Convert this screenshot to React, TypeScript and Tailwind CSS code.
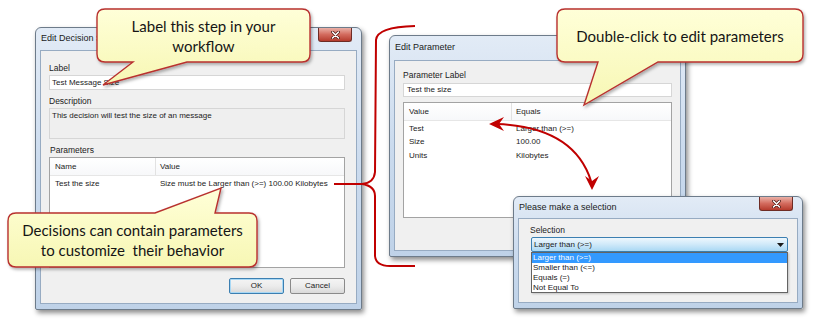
import type { ReactNode } from "react";

const sys = "font-['Liberation_Sans',Arial,sans-serif]";

const CloseBtn = () => (
  <div className="absolute top-0 right-[5px] w-[34px] h-[14px] rounded-b-[3px] border border-t-0 border-[#6e2c25] bg-gradient-to-b from-[#e9b0a7] via-[#d36b5e] to-[#b53b2d] flex items-center justify-center">
    <svg width="9" height="8" viewBox="0 0 9 8">
      <path d="M1.5 1 L7.5 7 M7.5 1 L1.5 7" stroke="#4a1510" strokeWidth="3" strokeLinecap="round" />
      <path d="M1.5 1 L7.5 7 M7.5 1 L1.5 7" stroke="#ffffff" strokeWidth="1.6" strokeLinecap="round" />
    </svg>
  </div>
);

type WinProps = {
  className: string;
  title: string;
  titleH: string;
  children: ReactNode;
};

const Win = ({ className, title, titleH, children }: WinProps) => (
  <div
    className={`absolute flex flex-col border border-[#6d7b8a] rounded-t-[6px] rounded-b-[2px] bg-gradient-to-b from-[#e2ebf6] via-[#cbdbee] to-[#bfd2e8] px-[4px] pb-[5px] shadow-[2px_3px_5px_rgba(0,0,0,0.45)] ${className}`}
  >
    <div className={`relative flex items-center ${titleH}`}>
      <span className="text-[9px] text-[#1a1a1a] pl-[1px]">{title}</span>
      <CloseBtn />
    </div>
    <div className="flex-1 border border-[#97abc2] bg-[#f0f0f0] flex flex-col">{children}</div>
  </div>
);

const Btn = ({ label, focus }: { label: string; focus?: boolean }) => (
  <div
    className={`w-[55px] h-[16px] rounded-[2px] border flex items-center justify-center bg-gradient-to-b from-[#f4f4f4] via-[#ececec] to-[#d9d9d9] text-[8px] ${
      focus ? "border-[#3c7fb1] shadow-[inset_0_0_0_1px_#a8d8f5]" : "border-[#8a8a8a]"
    }`}
  >
    {label}
  </div>
);

const DecisionWindow = () => (
  <Win className="left-[35px] top-[27px] w-[327px] h-[283px]" title="Edit Decision Step" titleH="h-[22px]">
    <div className="flex-1 flex flex-col pl-[8px] pr-[11px] pt-[12px] text-[8px] text-[#1b1b1b]">
      <div className="h-[10px] leading-[10px] text-[8.5px]">Label</div>
      <div className="mt-[2px] h-[15px] border border-[#d6d6d6] bg-white pl-[2px] leading-[13px]">Test Message Size</div>
      <div className="mt-[6px] h-[10px] leading-[10px] text-[8.5px]">Description</div>
      <div className="mt-[2px] h-[31px] border border-[#d6d6d6] bg-[#efefef] pl-[2px] pt-[2px] leading-[10px]">
        This decision will test the size of an message
      </div>
      <div className="mt-[6px] h-[10px] leading-[10px] text-[8.5px] pl-[1px]">Parameters</div>
      <div className="mt-[2px] h-[111px] border border-[#a3a3a3] bg-white flex flex-col">
        <div className="h-[18px] flex items-center border-b border-[#e6e6e6] bg-gradient-to-b from-white to-[#f7f8fa]">
          <div className="w-[106px] h-full flex items-center pl-[5px] border-r border-[#e2e2e2]">Name</div>
          <div className="pl-[4px]">Value</div>
        </div>
        <div className="mt-[2px] flex h-[12px] items-center">
          <div className="w-[107px] pl-[5px]">Test the size</div>
          <div className="pl-[3px]">Size must be Larger than (&gt;=) 100.00 Kilobytes</div>
        </div>
      </div>
      <div className="mt-[10px] flex justify-end gap-[6px]">
        <Btn label="OK" focus />
        <Btn label="Cancel" />
      </div>
    </div>
  </Win>
);

const ParamWindow = () => (
  <Win className="left-[389px] top-[35px] w-[297px] h-[222px]" title="Edit Parameter" titleH="h-[24px]">
    <div className="flex-1 flex flex-col pl-[8px] pr-[8px] pt-[9px] text-[8px] text-[#1b1b1b]">
      <div className="h-[10px] leading-[10px] text-[8.5px]">Parameter Label</div>
      <div className="mt-[3px] h-[14px] border border-[#d6d6d6] bg-white pl-[3px] leading-[12px]">Test the size</div>
      <div className="mt-[5px] h-[116px] border border-[#a3a3a3] bg-white flex flex-col">
        <div className="h-[18px] flex items-center border-b border-[#e6e6e6] bg-gradient-to-b from-white to-[#f7f8fa]">
          <div className="w-[108px] h-full flex items-center pl-[5px] border-r border-[#e2e2e2]">Value</div>
          <div className="pl-[4px]">Equals</div>
        </div>
        {[
          ["Test", "Larger than (>=)"],
          ["Size", "100.00"],
          ["Units", "Kilobytes"],
        ].map(([a, b], i) => (
          <div key={a} className={`flex h-[13.5px] items-center ${i === 0 ? "mt-[1px]" : ""}`}>
            <div className="w-[109px] pl-[5px]">{a}</div>
            <div className="pl-[3px]">{b}</div>
          </div>
        ))}
      </div>
    </div>
  </Win>
);

const SelectWindow = () => (
  <Win className="left-[513px] top-[196px] w-[290px] h-[113px] pb-[3px]" title="Please make a selection" titleH="h-[21px]">
    <div className="flex-1 flex flex-col pl-[11px] pt-[6px] text-[8px] text-[#1b1b1b]">
      <div className="h-[10px] leading-[10px] text-[8.5px]">Selection</div>
      <div className="mt-[2px] ml-[1px] w-[257px] h-[15px] rounded-[2px] border border-[#3c7fb1] bg-gradient-to-b from-[#eef7fd] via-[#cfe9f9] to-[#a9d8f4] flex items-center justify-between pl-[2px] pr-[3px]">
        <span>Larger than (&gt;=)</span>
        <svg width="7" height="4" viewBox="0 0 7 4">
          <path d="M0 0 H7 L3.5 4 Z" fill="#1a1a1a" />
        </svg>
      </div>
      <div className="ml-[1px] w-[257px] h-[41px] border border-[#646464] bg-white flex flex-col shadow-[1px_1px_2px_rgba(0,0,0,0.2)]">
        <div className="h-[10px] leading-[10px] bg-[#3399ff] text-white pl-[1px]">Larger than (&gt;=)</div>
        <div className="h-[10px] leading-[10px] pl-[1px]">Smaller than (&lt;=)</div>
        <div className="h-[10px] leading-[10px] pl-[1px]">Equals (=)</div>
        <div className="h-[10px] leading-[10px] pl-[1px]">Not Equal To</div>
      </div>
    </div>
  </Win>
);

const callouts = [
  "M105,9 H302 Q310,9 310,17 V54 Q310,62 302,62 H187 L103,85 L133,62 H105 Q97,62 97,54 V17 Q97,9 105,9 Z",
  "M16,213 H155 L221,188 L215,213 H249 Q257,213 257,221 V259 Q257,267 249,267 H16 Q8,267 8,259 V221 Q8,213 16,213 Z",
  "M565,9 H795 Q803,9 803,17 V54 Q803,62 795,62 H658 L584,105 L598,62 H565 Q557,62 557,54 V17 Q557,9 565,9 Z",
];

const Overlay = () => (
  <svg className="absolute inset-0 pointer-events-none" width="813" height="319" viewBox="0 0 813 319">
    <defs>
      <linearGradient id="cfill" x1="0" y1="0" x2="0" y2="1">
        <stop offset="0" stopColor="#ffffd8" />
        <stop offset="1" stopColor="#f7f7b4" />
      </linearGradient>
      <filter id="csh" x="-10%" y="-10%" width="120%" height="130%">
        <feDropShadow dx="1.5" dy="2" stdDeviation="1.5" floodColor="#000" floodOpacity="0.3" />
      </filter>
    </defs>

    {/* brace */}
    <path
      d="M415,26 Q377,27 376,40 L375,172 Q374,183 362,184 Q375,186 375,196 L375,256 Q376,266 390,266 L415,266"
      fill="none"
      stroke="#c00000"
      strokeWidth="2"
    />
    <path d="M334,184 L362,184" stroke="#c00000" strokeWidth="2" />

    {/* double arrow */}
    <path d="M497,124 Q574,127 591,181" fill="none" stroke="#c00000" strokeWidth="2" />
    <polygon points="489,124 504,117 499,124 504,131" fill="#c00000" />
    <polygon points="592,190 585,176 592,181 599,176" fill="#c00000" />

    {callouts.map((d) => (
      <path key={d} d={d} fill="url(#cfill)" stroke="#b8312f" strokeWidth="1.4" filter="url(#csh)" />
    ))}
  </svg>
);

const Bubble = ({ className, children }: { className: string; children: ReactNode }) => (
  <div
    className={`absolute flex items-center justify-center text-center font-['Lato',sans-serif] text-[15px] leading-[20px] text-[#151515] ${className}`}
  >
    <div>{children}</div>
  </div>
);

export default function App() {
  return (
    <div className={`relative w-[813px] h-[319px] bg-white overflow-hidden ${sys}`}>
      <DecisionWindow />
      <ParamWindow />
      <SelectWindow />
      <Overlay />
      <Bubble className="left-[97px] top-[9px] w-[213px] h-[53px]">
        Label this step in your
        <br />
        workflow
      </Bubble>
      <Bubble className="left-[8px] top-[213px] w-[249px] h-[54px]">
        Decisions can contain parameters
        <br />
        to customize{"\u00a0"} their behavior
      </Bubble>
      <Bubble className="left-[557px] top-[9px] w-[246px] h-[53px]">Double-click to edit parameters</Bubble>
    </div>
  );
}
